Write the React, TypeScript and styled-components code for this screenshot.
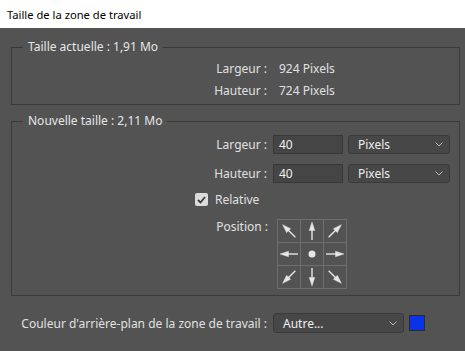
import React from 'react'
import styled, { createGlobalStyle } from 'styled-components'

const GlobalStyle = createGlobalStyle`
  html, body {
    margin: 0;
    padding: 0;
    background: #535353;
  }
  body {
    font-family: "Noto Sans", "Open Sans", sans-serif;
  }
`

const Dialog = styled.div`
  width: 465px;
  height: 351px;
  background: #535353;
  color: #e0e0e0;
  font-size: 12px;
  overflow: hidden;
`

const TitleBar = styled.div`
  height: 28px;
  background: #ffffff;
  color: #000;
  display: flex;
  align-items: center;
  padding-left: 7px;
  font-size: 11.2px;
`

const Content = styled.div`
  padding: 11px 5px 0 11px;
`

const Group = styled.fieldset<{ $gap?: number }>`
  margin: ${({ $gap }) => $gap ?? 0}px 0 0 0;
  padding: 0;
  border: 1px solid #3a3a3a;
  min-width: 0;
  display: flex;
  flex-direction: column;
`

const Legend = styled.legend`
  margin-left: 11px;
  padding: 0 5px;
  line-height: 16px;
  color: #e6e6e6;
`

const Body = styled.div<{ $top: number; $bottom: number; $gap: number }>`
  display: flex;
  flex-direction: column;
  gap: ${({ $gap }) => $gap}px;
  padding: ${({ $top }) => $top}px 0 ${({ $bottom }) => $bottom}px 0;
`

const Row = styled.div<{ $h?: number }>`
  display: flex;
  align-items: center;
  height: ${({ $h }) => ($h ? `${$h}px` : 'auto')};
`

const Label = styled.div<{ $w?: number }>`
  width: ${({ $w }) => $w ?? 255}px;
  text-align: right;
  flex-shrink: 0;
  white-space: nowrap;
`

const Value = styled.div`
  margin-left: 12px;
`

const NumInput = styled.div`
  box-sizing: border-box;
  margin-left: 6px;
  width: 70px;
  height: 19px;
  background: #454545;
  border: 1px solid #383838;
  color: #f0f0f0;
  padding-left: 5px;
  display: flex;
  align-items: center;
`

const Select = styled.div<{ $w: number; $ml: number; $h?: number }>`
  box-sizing: border-box;
  margin-left: ${({ $ml }) => $ml}px;
  width: ${({ $w }) => $w}px;
  height: ${({ $h }) => $h ?? 19}px;
  background: #474747;
  border: 1px solid #3a3a3a;
  border-radius: 3px;
  color: #eeeeee;
  padding: 0 6px 0 9px;
  display: flex;
  align-items: center;
  justify-content: space-between;
`

const CheckRow = styled.label`
  display: flex;
  align-items: center;
  gap: 7px;
  height: 13px;
  padding-left: 183px;
`

const CheckBox = styled.span`
  width: 13px;
  height: 13px;
  border-radius: 2px;
  background: #dcdcdc;
  display: flex;
  align-items: center;
  justify-content: center;
`

const PositionRow = styled.div`
  display: flex;
  align-items: flex-start;
  margin-top: 3px;
`

const PositionLabel = styled(Label)`
  width: 256px;
  line-height: 16px;
`

const AnchorGrid = styled.div`
  margin-left: 9px;
  display: grid;
  grid-template-columns: repeat(3, 22px);
  grid-template-rows: repeat(3, 22px);
  gap: 1px;
  padding: 1px;
  background: #6e6e6e;
`

const Cell = styled.div`
  background: #535353;
  display: flex;
  align-items: center;
  justify-content: center;
`

const BottomRow = styled(Row)`
  margin-top: 17px;
  height: 20px;
`

const Swatch = styled.div<{ $color: string }>`
  box-sizing: border-box;
  margin-left: 5px;
  width: 16px;
  height: 16px;
  background: ${({ $color }) => $color};
  border: 1px solid #2a2a2a;
`

const Chevron = () => (
  <svg width="8" height="5" viewBox="0 0 8 5">
    <path d="M0.5 0.5 L4 4 L7.5 0.5" fill="none" stroke="#b8b8b8" strokeWidth="1" />
  </svg>
)

const Arrow = ({ angle }: { angle: number }) => (
  <svg width="22" height="22" viewBox="0 0 22 22">
    <g transform={`rotate(${angle} 11 11)`} fill="#e6e6e6" stroke="#e6e6e6">
      <line x1="11" y1="9" x2="11" y2="20" strokeWidth="1.4" />
      <polygon points="11,2 8.2,10.5 13.8,10.5" strokeWidth="0.4" />
    </g>
  </svg>
)

const Dot = () => (
  <svg width="22" height="22" viewBox="0 0 22 22">
    <circle cx="11" cy="11" r="3.5" fill="#e6e6e6" />
  </svg>
)

const anchors = [-45, 0, 45, -90, null, 90, -135, 180, 135]

const App = () => {
  return (
    <Dialog>
      <GlobalStyle />
      <TitleBar>Taille de la zone de travail</TitleBar>
      <Content>
        <Group>
          <Legend>Taille actuelle : 1,91 Mo</Legend>
          <Body $top={2} $bottom={3} $gap={0}>
            <Row $h={22}>
              <Label>Largeur :</Label>
              <Value>924 Pixels</Value>
            </Row>
            <Row $h={22}>
              <Label>Hauteur :</Label>
              <Value>724 Pixels</Value>
            </Row>
          </Body>
        </Group>

        <Group $gap={8}>
          <Legend>Nouvelle taille : 2,11 Mo</Legend>
          <Body $top={6} $bottom={6} $gap={10}>
            <Row>
              <Label>Largeur :</Label>
              <NumInput>40</NumInput>
              <Select $w={102} $ml={5}>
                Pixels <Chevron />
              </Select>
            </Row>
            <Row>
              <Label>Hauteur :</Label>
              <NumInput>40</NumInput>
              <Select $w={102} $ml={5}>
                Pixels <Chevron />
              </Select>
            </Row>
            <CheckRow>
              <CheckBox>
                <svg width="9" height="8" viewBox="0 0 9 8">
                  <path d="M1 4 L3.5 6.5 L8 1" fill="none" stroke="#3a3a3a" strokeWidth="1.8" />
                </svg>
              </CheckBox>
              Relative
            </CheckRow>
            <PositionRow>
              <PositionLabel>Position :</PositionLabel>
              <AnchorGrid>
                {anchors.map((a, i) => (
                  <Cell key={i}>{a === null ? <Dot /> : <Arrow angle={a} />}</Cell>
                ))}
              </AnchorGrid>
            </PositionRow>
          </Body>
        </Group>

        <BottomRow>
          <Label $w={256}>Couleur d'arrière-plan de la zone de travail :</Label>
          <Select $w={131} $ml={6} $h={20}>
            Autre... <Chevron />
          </Select>
          <Swatch $color="#0a32e6" />
        </BottomRow>
      </Content>
    </Dialog>
  )
}

export default App
